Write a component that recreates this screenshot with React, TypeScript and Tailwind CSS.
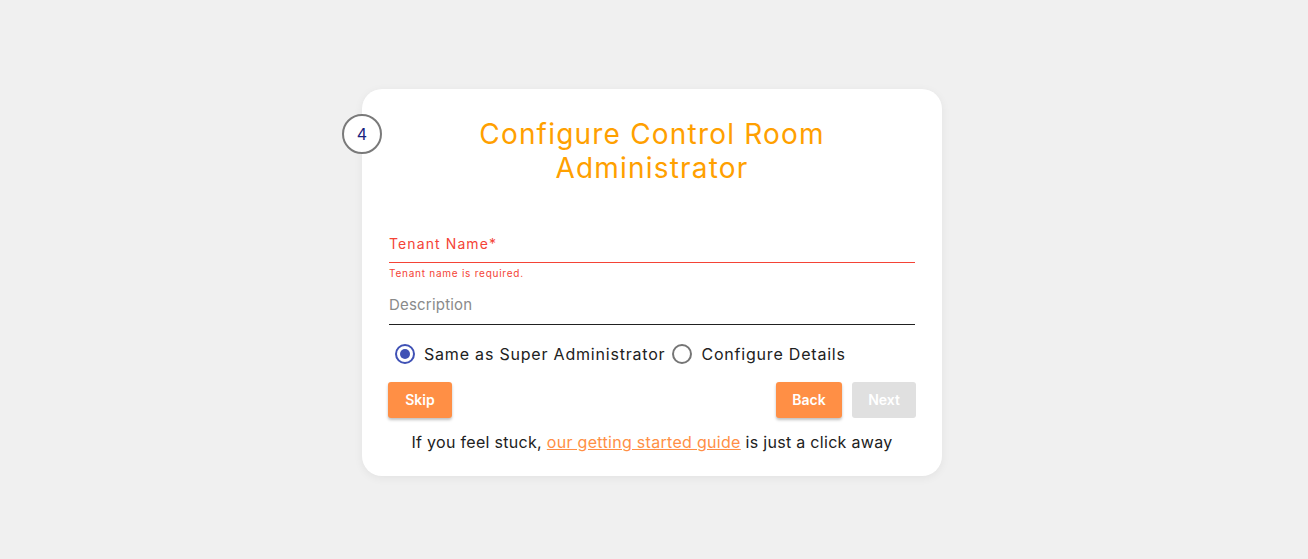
import React from "react"

const font = { fontFamily: "Inter, 'Noto Sans', sans-serif" }

const Radio = ({ checked, label }: { checked: boolean; label: string }) => (
  <label className="flex items-center gap-[9px]">
    <span
      className={`flex h-[20px] w-[20px] items-center justify-center rounded-full border-2 ${
        checked ? "border-[#3f51b5]" : "border-[#757575]"
      }`}
    >
      {checked && <span className="h-[10px] w-[10px] rounded-full bg-[#3f51b5]" />}
    </span>
    <span className="text-[16px] tracking-[0.8px] text-[#212121]">{label}</span>
  </label>
)

export default function App() {
  return (
    <div className="flex min-h-[559px] w-full justify-center bg-[#f0f0f0] pr-[4px] pt-[89px]" style={font}>
      <div className="relative h-[387px] w-[580px] rounded-[20px] bg-white px-[27px] pt-[28px] shadow-[0_2px_10px_rgba(0,0,0,0.06)]">
        <div className="absolute left-[-20px] top-[25px] flex h-[40px] w-[40px] items-center justify-center rounded-full border-2 border-[#7a7a7a] bg-white text-[16px] text-[#1a237e]">
          4
        </div>

        <h1 className="mx-auto w-[400px] text-center text-[28px] leading-[34px] font-normal tracking-[1.2px] text-[#ffa000]">
          Configure Control Room Administrator
        </h1>

        <div className="mt-[46px]">
          <div className="border-b border-[#f44336] pb-[7px]">
            <span className="text-[14px] tracking-[1.1px] text-[#f44336]">Tenant Name*</span>
          </div>
          <div className="mt-[3px] text-[10px] leading-[14px] tracking-[0.75px] text-[#f44336]">
            Tenant name is required.
          </div>
        </div>

        <div className="mt-[12px] border-b border-[#212121] pb-[7px]">
          <span className="text-[15px] tracking-[0.2px] text-[#8a8a8a]">Description</span>
        </div>

        <div className="mt-[17px] flex items-center gap-[7px] pl-[6px]">
          <Radio checked label="Same as Super Administrator" />
          <Radio checked={false} label="Configure Details" />
        </div>

        <div className="-mx-[1px] mt-[16px] flex items-center">
          <button className="h-[36px] w-[64px] rounded-[3px] bg-[#ff8f45] text-[14px] font-semibold text-white shadow-[0_2px_3px_rgba(0,0,0,0.25)]">
            Skip
          </button>
          <div className="flex-1" />
          <button className="h-[36px] w-[66px] rounded-[3px] bg-[#ff8f45] text-[14px] font-semibold text-white shadow-[0_2px_3px_rgba(0,0,0,0.25)]">
            Back
          </button>
          <button className="ml-[10px] h-[36px] w-[64px] rounded-[3px] bg-[#e0e0e0] text-[14px] font-semibold text-white">
            Next
          </button>
        </div>

        <p className="mt-[12px] text-center text-[16px] tracking-[0.3px] text-[#212121]">
          If you feel stuck,{" "}
          <a className="text-[#ff8f45] underline">our getting started guide</a> is just a click away
        </p>
      </div>
    </div>
  )
}
